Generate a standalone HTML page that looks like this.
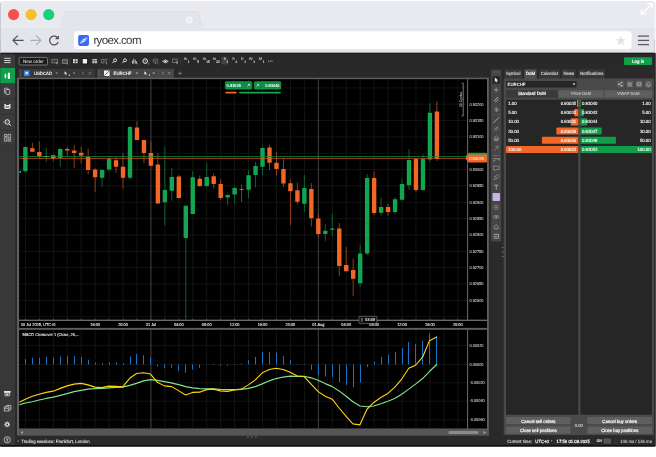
<!DOCTYPE html>
<html lang="en"><head><meta charset="utf-8"><title>ryoex.com</title>
<style>
html,body{margin:0;padding:0;background:#fff;}
body{width:656px;height:457px;overflow:hidden;position:relative;font-family:"Liberation Sans",sans-serif;}
#win{position:absolute;left:0;top:0;width:656px;height:457px;will-change:transform;}
svg text{font-family:"Liberation Sans",sans-serif;text-rendering:geometricPrecision;}
</style></head><body>
<svg id="win" width="656" height="457" viewBox="0 0 656 457">
<rect x="0.00" y="0.00" width="656.00" height="457.00" fill="#ffffff"/>
<rect x="0.60" y="40.00" width="654.20" height="406.40" fill="#2a2a2a"/>
<rect x="654.60" y="52.80" width="1.40" height="393.60" fill="#4a4a4a"/>
<rect x="654.60" y="2.00" width="1.40" height="50.80" fill="#f6f6f8"/>
<clipPath id="wclip"><path d="M0.3,446.5 V3.4 Q0.3,0.9 2.8,0.9 H652.2 Q654.7,0.9 654.7,3.4 V446.5 Z"/></clipPath>
<g clip-path="url(#wclip)">
<rect x="0.00" y="0.00" width="656.00" height="27.00" fill="#e9eaef"/>
<rect x="0.00" y="27.00" width="656.00" height="25.80" fill="#e4e5ea"/>
<path d="M60.5,27.2 L64.6,12.6 Q65,11.6 66,11.6 L196.8,11.6 Q197.9,11.6 198.3,12.6 L202.6,27.2 Z" fill="#e4e5ea" stroke="#d4d5da" stroke-width="0.5"/>
<rect x="0.00" y="26.70" width="656.00" height="0.80" fill="#f1f2f5"/>
<rect x="61.20" y="26.60" width="140.80" height="1.00" fill="#e4e5ea"/>
<rect x="0.00" y="2.50" width="1.00" height="50.00" fill="#bcbdc1"/>
</g>
<circle cx="13.60" cy="14.60" r="5.60" fill="#f6504e" stroke="none" stroke-width="1"/>
<circle cx="31.10" cy="14.60" r="5.60" fill="#f4c02f" stroke="none" stroke-width="1"/>
<circle cx="48.70" cy="14.60" r="5.60" fill="#12d375" stroke="none" stroke-width="1"/>
<circle cx="189.30" cy="20.00" r="3.40" fill="#f6f6f8" stroke="none" stroke-width="1"/>
<path d="M187.9,18.6 L190.7,21.4 M190.7,18.6 L187.9,21.4" fill="none" stroke="#d9dadf" stroke-width="0.9"/>
<path d="M642,13.4 L651.6,4.2 M647.6,3.9 L652.1,3.7 L651.9,8.2 M641.4,9.6 L641.3,14 L645.8,13.9" fill="none" stroke="#ffffff" stroke-width="1.3" stroke-linecap="round" stroke-linejoin="round"/>
<path d="M23.6,40.3 L13.2,40.3 M17.7,35.6 L13.0,40.3 L17.7,45.0" fill="none" stroke="#505054" stroke-width="1.2" stroke-linejoin="miter"/>
<path d="M30.2,40.3 L40.6,40.3 M36.1,35.6 L40.8,40.3 L36.1,45.0" fill="none" stroke="#adaeb2" stroke-width="1.2"/>
<path d="M57.9,38.3 A4.4,4.4 0 1 0 58.2,42.0" fill="none" stroke="#505054" stroke-width="1.2"/>
<path d="M58.9,35.2 L58.9,39.2 L55.0,39.2 Z" fill="#505054" stroke="none" stroke-width="1"/>
<rect x="74.00" y="31.20" width="557.60" height="17.80" fill="#ffffff" rx="2.2"/>
<rect x="78.20" y="35.00" width="10.80" height="10.90" fill="#3a69f4" rx="1.8"/>
<path d="M80.3,42.9 L82.9,39.5 H85.0 L82.4,42.9 Z M82.5,41.5 L85.1,38.1 H87.1 L84.5,41.5 Z" fill="none" stroke="#eef3ff" stroke-width="0.75" stroke-linejoin="round"/>
<text x="93.40" y="43.67" font-size="11.5" fill="#37373b" letter-spacing="-0.62">ryoex.com</text>
<polygon points="620.80,35.40 622.15,38.94 625.94,39.13 622.99,41.51 623.97,45.17 620.80,43.10 617.63,45.17 618.61,41.51 615.66,39.13 619.45,38.94" fill="#e2e3e7"/>
<rect x="637.90" y="35.45" width="11.10" height="1.30" fill="#5b5b5f"/>
<rect x="637.90" y="39.75" width="11.10" height="1.30" fill="#5b5b5f"/>
<rect x="637.90" y="43.95" width="11.10" height="1.30" fill="#5b5b5f"/>
<g clip-path="url(#wclip)">
<rect x="0.00" y="52.80" width="656.00" height="394.00" fill="#1d1d1d"/>
<rect x="0.00" y="54.40" width="656.00" height="392.00" fill="#2a2a2a"/>
<rect x="0.00" y="54.40" width="15.00" height="392.00" fill="#3b3b3b"/>
<rect x="4.20" y="57.85" width="6.40" height="0.90" fill="#e6e6e6"/>
<rect x="4.20" y="60.05" width="6.40" height="0.90" fill="#e6e6e6"/>
<rect x="4.20" y="62.15" width="6.40" height="0.90" fill="#e6e6e6"/>
<rect x="0.00" y="67.90" width="15.00" height="15.30" fill="#0e9f4a"/>
<polygon points="4.6,74.0 7.0,76.0 4.6,78.1" fill="#fff"/>
<rect x="5.20" y="73.00" width="0.50" height="6.00" fill="#e8fff0"/>
<rect x="7.80" y="72.80" width="2.20" height="6.00" fill="#fff" rx="0.3"/>
<rect x="0.00" y="98.70" width="15.00" height="0.60" fill="#2c2c2c"/>
<rect x="0.00" y="114.40" width="15.00" height="0.60" fill="#2c2c2c"/>
<rect x="0.00" y="129.90" width="15.00" height="0.60" fill="#2c2c2c"/>
<rect x="0.00" y="144.90" width="15.00" height="0.60" fill="#2c2c2c"/>
<rect x="0.00" y="145.50" width="15.00" height="301.00" fill="#383838"/>
<rect x="4.4" y="88.2" width="3.9" height="4.9" rx="0.8" fill="none" stroke="#dcdcdc" stroke-width="0.65"/>
<rect x="5.8" y="89.5" width="3.9" height="4.9" rx="0.8" fill="#3b3b3b" stroke="#e6e6e6" stroke-width="0.7"/>
<rect x="4.3" y="105.0" width="6.2" height="3.9" rx="1.3" fill="#e8e8e8"/>
<path d="M4.9,105.4 l-0.5,-1.3 l1.6,0.7 M9.9,105.4 l0.5,-1.3 l-1.6,0.7" fill="#e8e8e8" stroke="#e8e8e8" stroke-width="0.6"/>
<rect x="5.40" y="106.50" width="4.00" height="1.00" fill="#3b3b3b" rx="0.4"/>
<circle cx="7.20" cy="122.00" r="2.30" fill="none" stroke="#e9e9e9" stroke-width="1.0"/>
<path d="M8.9,123.8 L10.9,125.8" fill="none" stroke="#e9e9e9" stroke-width="1.0"/>
<path d="M4.1,122.0 l-0.9,0.0 M6.2,122.4 l0.8,-0.8 l0.6,0.6 l0.7,-0.8" fill="none" stroke="#e9e9e9" stroke-width="0.45"/>
<path d="M4.4,134.4 h2.5 v2.2 h-2.5 z M8.1,134.4 h2.5 v3.6 h-2.5 z M4.4,137.8 h2.5 v3.4 h-2.5 z M8.1,139.2 h2.5 v2 h-2.5 z" fill="none" stroke="#e9e9e9" stroke-width="0.6"/>
<rect x="4.00" y="391.00" width="6.60" height="1.70" fill="#e9e9e9" rx="0.3"/>
<path d="M5,392.8 h4.6 v3 h-4.6 z" fill="none" stroke="#e9e9e9" stroke-width="0.7"/>
<rect x="6.30" y="393.60" width="2.00" height="1.50" fill="#e9e9e9"/>
<path d="M4.3,406.8 h4.6 v4.2 h-4.6 z M5.4,406.6 l1.2,-1.2 h4.2 v4.2 l-1.6,1" fill="none" stroke="#e9e9e9" stroke-width="0.7"/>
<path d="M4.4,408.4 h4.4" fill="none" stroke="#e9e9e9" stroke-width="0.6"/>
<circle cx="7.20" cy="424.40" r="1.60" fill="none" stroke="#e9e9e9" stroke-width="1.2"/>
<line x1="9.20" y1="424.40" x2="10.10" y2="424.40" stroke="#e9e9e9" stroke-width="0.9"/>
<line x1="8.61" y1="425.81" x2="9.25" y2="426.45" stroke="#e9e9e9" stroke-width="0.9"/>
<line x1="7.20" y1="426.40" x2="7.20" y2="427.30" stroke="#e9e9e9" stroke-width="0.9"/>
<line x1="5.79" y1="425.81" x2="5.15" y2="426.45" stroke="#e9e9e9" stroke-width="0.9"/>
<line x1="5.20" y1="424.40" x2="4.30" y2="424.40" stroke="#e9e9e9" stroke-width="0.9"/>
<line x1="5.79" y1="422.99" x2="5.15" y2="422.35" stroke="#e9e9e9" stroke-width="0.9"/>
<line x1="7.20" y1="422.40" x2="7.20" y2="421.50" stroke="#e9e9e9" stroke-width="0.9"/>
<line x1="8.61" y1="422.99" x2="9.25" y2="422.35" stroke="#e9e9e9" stroke-width="0.9"/>
<circle cx="7.20" cy="439.80" r="3.10" fill="none" stroke="#e9e9e9" stroke-width="0.7"/>
<text transform="translate(7.20 441.78) scale(0.9259 1)" font-size="4.968" fill="#e9e9e9" text-anchor="middle" font-weight="bold">?</text>
<rect x="15.00" y="54.20" width="641.00" height="13.80" fill="#292929"/>
<rect x="19.10" y="57.40" width="28.40" height="7.60" fill="#1b1b1b" rx="1.2" stroke="#a2a2a2" stroke-width="0.65"/>
<text transform="translate(33.30 62.94) scale(0.9259 1)" font-size="4.86" fill="#f2f2f2" text-anchor="middle">New order</text>
<line x1="49.50" y1="57.60" x2="49.50" y2="64.80" stroke="#3d3d3d" stroke-width="0.5"/>
<line x1="60.00" y1="57.60" x2="60.00" y2="64.80" stroke="#3d3d3d" stroke-width="0.5"/>
<line x1="70.60" y1="57.60" x2="70.60" y2="64.80" stroke="#3d3d3d" stroke-width="0.5"/>
<line x1="99.80" y1="57.60" x2="99.80" y2="64.80" stroke="#3d3d3d" stroke-width="0.5"/>
<line x1="109.40" y1="57.60" x2="109.40" y2="64.80" stroke="#3d3d3d" stroke-width="0.5"/>
<path d="M51.9,59.3 h5.6 v3.6 h-5.6 z" fill="none" stroke="#a9a9a9" stroke-width="0.6"/>
<path d="M55.6,61.4 l2,1.8 l-0.9,0.1 l0.5,1.1" fill="none" stroke="#cfcfcf" stroke-width="0.55"/>
<path d="M53.2,61 h1.6" fill="none" stroke="#a9a9a9" stroke-width="0.5"/>
<path d="M62.4,59.3 h5.2 v4.2 h-5.2 z M62.4,60.6 h5.2 M62.4,62.2 h5.2" fill="none" stroke="#a9a9a9" stroke-width="0.55"/>
<path d="M66.6,63.2 l1.5,1.3" fill="none" stroke="#cfcfcf" stroke-width="0.55"/>
<rect x="73.00" y="59.00" width="2.10" height="1.90" fill="#cdcdcd"/>
<rect x="73.00" y="61.30" width="2.10" height="1.90" fill="#cdcdcd"/>
<rect x="75.60" y="59.00" width="2.10" height="1.90" fill="#cdcdcd"/>
<rect x="75.60" y="61.30" width="2.10" height="1.90" fill="#cdcdcd"/>
<rect x="81.60" y="57.90" width="6.60" height="6.60" fill="#1a1a1a" rx="0.9"/>
<rect x="82.70" y="59.00" width="4.40" height="4.40" fill="#f2f2f2" rx="0.3"/>
<rect x="92.30" y="59.00" width="4.80" height="1.50" fill="#bdbdbd"/>
<rect x="92.30" y="61.00" width="2.20" height="2.30" fill="#bdbdbd"/>
<rect x="94.90" y="61.00" width="2.20" height="2.30" fill="#bdbdbd"/>
<path d="M101.6,59.4 h2.4 v3.6 h-2.4 z M104.6,59.4 h2.2 v2.0" fill="none" stroke="#a9a9a9" stroke-width="0.55"/>
<path d="M105.2,61.6 l1.8,1.6 l-0.8,0.1 l0.4,1.0" fill="none" stroke="#cfcfcf" stroke-width="0.5"/>
<circle cx="115.10" cy="60.30" r="1.50" fill="none" stroke="#f0f0f0" stroke-width="0.85"/>
<path d="M114.0,61.4 L112.4,63.1" fill="none" stroke="#f0f0f0" stroke-width="0.95"/>
<circle cx="125.00" cy="60.30" r="1.50" fill="none" stroke="#f0f0f0" stroke-width="0.85"/>
<path d="M123.9,61.4 L122.30000000000001,63.1" fill="none" stroke="#f0f0f0" stroke-width="0.95"/>
<line x1="129.30" y1="57.60" x2="129.30" y2="64.60" stroke="#444" stroke-width="0.5"/>
<rect x="132.00" y="60.60" width="0.80" height="3.00" fill="#e0e0e0"/>
<rect x="133.40" y="58.80" width="0.80" height="4.80" fill="#e0e0e0"/>
<rect x="134.80" y="59.80" width="0.80" height="3.80" fill="#e0e0e0"/>
<rect x="136.20" y="61.40" width="0.80" height="2.20" fill="#e0e0e0"/>
<rect x="136.80" y="63.50" width="0.80" height="0.80" fill="#ccc"/>
<circle cx="145.20" cy="61.10" r="2.30" fill="none" stroke="#eee" stroke-width="1.0"/>
<path d="M145.2,59.8 v1.7 l1.0,0.7" fill="none" stroke="#eee" stroke-width="0.55"/>
<rect x="147.80" y="63.50" width="0.80" height="0.80" fill="#ddd"/>
<line x1="150.00" y1="57.60" x2="150.00" y2="64.60" stroke="#444" stroke-width="0.5"/>
<path d="M155.5,58.4 l2.3,1.2 v2.7 l-2.3,1.2 l-2.3,-1.2 v-2.7 z M153.2,59.6 l2.3,1.2 l2.3,-1.2 M155.5,60.8 v2.7" fill="none" stroke="#8d8d8d" stroke-width="0.55"/>
<rect x="157.60" y="63.40" width="0.80" height="0.80" fill="#aaa"/>
<path d="M162.6,61.4 q2.8,-3.0 5.6,0 q-2.8,3.0 -5.6,0 z" fill="none" stroke="#eee" stroke-width="0.75"/>
<circle cx="165.40" cy="61.40" r="0.95" fill="#eee" stroke="none" stroke-width="1"/>
<path d="M172.5,59.1 h4.8 v3.4 h-4.8 z" fill="none" stroke="#a9a9a9" stroke-width="0.55"/>
<path d="M175.6,61.0 l2.2,1.9 l-1,0.1 l0.6,1.2" fill="none" stroke="#d0d0d0" stroke-width="0.55"/>
<line x1="180.70" y1="57.60" x2="180.70" y2="64.60" stroke="#444" stroke-width="0.5"/>
<rect x="221.40" y="57.00" width="6.50" height="7.60" fill="#424242" rx="0.8"/>
<text transform="translate(187.00 60.37) scale(0.9259 1)" font-size="4.104" fill="#d4d0c8" text-anchor="end"  stroke="#d4d0c8" stroke-width="0.1">m</text>
<text transform="translate(187.80 63.24) scale(0.9259 1)" font-size="3.456" fill="#ececec"  stroke="#ececec" stroke-width="0.08">1</text>
<text transform="translate(196.40 60.37) scale(0.9259 1)" font-size="4.104" fill="#d4d0c8" text-anchor="end"  stroke="#d4d0c8" stroke-width="0.1">m</text>
<text transform="translate(197.20 63.24) scale(0.9259 1)" font-size="3.456" fill="#ececec"  stroke="#ececec" stroke-width="0.08">5</text>
<text transform="translate(205.90 60.37) scale(0.9259 1)" font-size="4.104" fill="#d4d0c8" text-anchor="end"  stroke="#d4d0c8" stroke-width="0.1">m</text>
<text transform="translate(206.30 63.24) scale(0.9259 1)" font-size="3.456" fill="#ececec"  stroke="#ececec" stroke-width="0.08">15</text>
<text transform="translate(215.90 60.37) scale(0.9259 1)" font-size="4.104" fill="#d4d0c8" text-anchor="end"  stroke="#d4d0c8" stroke-width="0.1">m</text>
<text transform="translate(216.30 63.24) scale(0.9259 1)" font-size="3.456" fill="#ececec"  stroke="#ececec" stroke-width="0.08">30</text>
<text transform="translate(225.80 60.37) scale(0.9259 1)" font-size="4.104" fill="#d4d0c8" text-anchor="end"  stroke="#d4d0c8" stroke-width="0.1">h</text>
<text transform="translate(226.60 63.24) scale(0.9259 1)" font-size="3.456" fill="#ececec"  stroke="#ececec" stroke-width="0.08">1</text>
<text transform="translate(234.60 60.37) scale(0.9259 1)" font-size="4.104" fill="#d4d0c8" text-anchor="end"  stroke="#d4d0c8" stroke-width="0.1">h</text>
<text transform="translate(235.40 63.24) scale(0.9259 1)" font-size="3.456" fill="#ececec"  stroke="#ececec" stroke-width="0.08">4</text>
<text transform="translate(243.40 60.37) scale(0.9259 1)" font-size="4.104" fill="#d4d0c8" text-anchor="end"  stroke="#d4d0c8" stroke-width="0.1">D</text>
<text transform="translate(244.20 63.24) scale(0.9259 1)" font-size="3.456" fill="#ececec"  stroke="#ececec" stroke-width="0.08">1</text>
<text transform="translate(252.50 60.37) scale(0.9259 1)" font-size="4.104" fill="#d4d0c8" text-anchor="end"  stroke="#d4d0c8" stroke-width="0.1">W</text>
<text transform="translate(253.30 63.24) scale(0.9259 1)" font-size="3.456" fill="#ececec"  stroke="#ececec" stroke-width="0.08">1</text>
<text transform="translate(262.00 60.37) scale(0.9259 1)" font-size="4.104" fill="#d4d0c8" text-anchor="end"  stroke="#d4d0c8" stroke-width="0.1">M</text>
<text transform="translate(262.80 63.24) scale(0.9259 1)" font-size="3.456" fill="#ececec"  stroke="#ececec" stroke-width="0.08">1</text>
<circle cx="268.60" cy="61.00" r="0.55" fill="#dcdcdc" stroke="none" stroke-width="1"/>
<circle cx="270.30" cy="61.00" r="0.55" fill="#dcdcdc" stroke="none" stroke-width="1"/>
<circle cx="272.00" cy="61.00" r="0.55" fill="#dcdcdc" stroke="none" stroke-width="1"/>
<rect x="624.00" y="57.20" width="28.00" height="7.80" fill="#10a04a" rx="1.3"/>
<text transform="translate(638.10 62.90) scale(0.9259 1)" font-size="4.752" fill="#ffffff" text-anchor="middle"  stroke="#ffffff" stroke-width="0.2">Log in</text>
<rect x="15.00" y="68.00" width="475.00" height="10.20" fill="#292929"/>
<rect x="18.40" y="68.80" width="76.80" height="9.40" fill="#383838"/>
<rect x="97.20" y="68.80" width="76.70" height="9.40" fill="#464646"/>
<rect x="20.10" y="70.00" width="0.70" height="6.40" fill="#5d5d5d"/>
<rect x="98.60" y="70.00" width="0.70" height="6.40" fill="#6a6a6a"/>
<rect x="24.00" y="70.60" width="5.40" height="5.40" fill="#2d8cf0" rx="0.3"/>
<rect x="25.60" y="71.90" width="2.20" height="2.20" fill="#e6f1ff"/>
<text transform="translate(33.90 74.66) scale(0.9259 1)" font-size="4.644" fill="#f4f4f4" stroke="#f4f4f4" stroke-width="0.15">USDCAD</text>
<polygon points="55.50,72.46 57.90,72.46 56.70,74.26" fill="#9a9a9a"/>
<path d="M64.6,71.2 l2.6,2.2 l-1.2,0.1 l0.7,1.4 l-0.6,0.3 l-0.7,-1.4 l-0.8,0.8 z" fill="#f0f0f0" stroke="none" stroke-width="1"/>
<text transform="translate(68.60 76.08) scale(0.9259 1)" font-size="3.024" fill="#f5ecd2" font-weight="bold">1</text>
<polygon points="72.80,72.46 75.20,72.46 74.00,74.26" fill="#9a9a9a"/>
<rect x="78.60" y="70.00" width="0.50" height="6.40" fill="#4c4c4c"/>
<path d="M82,74.2 l2,-2 M82.2,72.6 a0.9,0.9 0 0 1 1.3,-0.3 M83.9,73.9 a0.9,0.9 0 0 1 -1.3,0.3" fill="none" stroke="#8c8c8c" stroke-width="0.55"/>
<path d="M88.7,72 l2.4,2.6 M91.1,72 l-2.4,2.6" fill="none" stroke="#8c8c8c" stroke-width="0.6"/>
<rect x="104.00" y="70.50" width="5.60" height="5.60" fill="#f7f7f7" rx="0.3"/>
<path d="M104.4,75.7 L109.2,70.9" fill="none" stroke="#e5342d" stroke-width="1.0"/>
<path d="M108.8,75.4 l1.2,1.2" fill="none" stroke="#ddd" stroke-width="0.5"/>
<text transform="translate(113.60 74.66) scale(0.9259 1)" font-size="4.644" fill="#f4f4f4" stroke="#f4f4f4" stroke-width="0.15">EURCHF</text>
<polygon points="135.60,72.46 138.00,72.46 136.80,74.26" fill="#b5b5b5"/>
<path d="M144.4,71.2 l2.6,2.2 l-1.2,0.1 l0.7,1.4 l-0.6,0.3 l-0.7,-1.4 l-0.8,0.8 z" fill="#f0f0f0" stroke="none" stroke-width="1"/>
<text transform="translate(148.40 76.08) scale(0.9259 1)" font-size="3.024" fill="#f5ecd2" font-weight="bold">1</text>
<polygon points="152.50,72.46 154.90,72.46 153.70,74.26" fill="#b5b5b5"/>
<rect x="158.40" y="70.00" width="0.50" height="6.40" fill="#5a5a5a"/>
<path d="M161.9,74.2 l2,-2 M162.1,72.6 a0.9,0.9 0 0 1 1.3,-0.3 M163.8,73.9 a0.9,0.9 0 0 1 -1.3,0.3" fill="none" stroke="#9c9c9c" stroke-width="0.55"/>
<path d="M168.1,72 l2.4,2.6 M170.5,72 l-2.4,2.6" fill="none" stroke="#9c9c9c" stroke-width="0.6"/>
<path d="M178.3,73.3 h3.4 M180,71.6 v3.4" fill="none" stroke="#858585" stroke-width="0.85"/>
<rect x="17.00" y="77.70" width="471.80" height="358.00" fill="#5f5f5f"/>
<rect x="19.10" y="79.20" width="467.90" height="240.60" fill="#000"/>
<rect x="19.10" y="320.30" width="467.90" height="7.60" fill="#000"/>
<rect x="19.10" y="329.80" width="467.90" height="98.90" fill="#000"/>
<rect x="19.10" y="428.60" width="469.70" height="7.10" fill="#565656"/>
<rect x="448.50" y="430.90" width="29.90" height="3.20" fill="#8a8a8a" rx="1.3"/>
<polygon points="20.6,432.4 23.0,430.9 23.0,433.9" fill="#a8a8a8"/>
<polygon points="486.0,432.4 483.6,430.9 483.6,433.9" fill="#a8a8a8"/>
<circle cx="247.90" cy="436.90" r="0.55" fill="#9a9a9a" stroke="none" stroke-width="1"/>
<circle cx="251.90" cy="436.90" r="0.55" fill="#9a9a9a" stroke="none" stroke-width="1"/>
<circle cx="255.90" cy="436.90" r="0.55" fill="#9a9a9a" stroke="none" stroke-width="1"/>
<clipPath id="cclip"><rect x="19.4" y="79.2" width="448" height="240.6"/></clipPath>
<clipPath id="mclip"><rect x="19.4" y="329.8" width="448" height="98.9"/></clipPath>
<g clip-path="url(#cclip)">
<line x1="19.40" y1="87.85" x2="467.40" y2="87.85" stroke="#161616" stroke-width="0.8"/>
<line x1="19.40" y1="104.20" x2="467.40" y2="104.20" stroke="#161616" stroke-width="0.8"/>
<line x1="19.40" y1="120.55" x2="467.40" y2="120.55" stroke="#161616" stroke-width="0.8"/>
<line x1="19.40" y1="136.90" x2="467.40" y2="136.90" stroke="#161616" stroke-width="0.8"/>
<line x1="19.40" y1="153.25" x2="467.40" y2="153.25" stroke="#161616" stroke-width="0.8"/>
<line x1="19.40" y1="169.60" x2="467.40" y2="169.60" stroke="#161616" stroke-width="0.8"/>
<line x1="19.40" y1="185.95" x2="467.40" y2="185.95" stroke="#161616" stroke-width="0.8"/>
<line x1="19.40" y1="202.30" x2="467.40" y2="202.30" stroke="#161616" stroke-width="0.8"/>
<line x1="19.40" y1="218.65" x2="467.40" y2="218.65" stroke="#161616" stroke-width="0.8"/>
<line x1="19.40" y1="235.00" x2="467.40" y2="235.00" stroke="#161616" stroke-width="0.8"/>
<line x1="19.40" y1="251.35" x2="467.40" y2="251.35" stroke="#161616" stroke-width="0.8"/>
<line x1="19.40" y1="267.70" x2="467.40" y2="267.70" stroke="#161616" stroke-width="0.8"/>
<line x1="19.40" y1="284.05" x2="467.40" y2="284.05" stroke="#161616" stroke-width="0.8"/>
<line x1="19.40" y1="300.40" x2="467.40" y2="300.40" stroke="#161616" stroke-width="0.8"/>
<line x1="19.40" y1="316.75" x2="467.40" y2="316.75" stroke="#161616" stroke-width="0.8"/>
<line x1="25.38" y1="79.20" x2="25.38" y2="319.80" stroke="#191919" stroke-width="0.8"/>
<line x1="39.32" y1="79.20" x2="39.32" y2="319.80" stroke="#191919" stroke-width="0.8"/>
<line x1="53.27" y1="79.20" x2="53.27" y2="319.80" stroke="#191919" stroke-width="0.8"/>
<line x1="67.23" y1="79.20" x2="67.23" y2="319.80" stroke="#191919" stroke-width="0.8"/>
<line x1="81.18" y1="79.20" x2="81.18" y2="319.80" stroke="#191919" stroke-width="0.8"/>
<line x1="95.12" y1="79.20" x2="95.12" y2="319.80" stroke="#191919" stroke-width="0.8"/>
<line x1="109.07" y1="79.20" x2="109.07" y2="319.80" stroke="#191919" stroke-width="0.8"/>
<line x1="123.02" y1="79.20" x2="123.02" y2="319.80" stroke="#191919" stroke-width="0.8"/>
<line x1="136.97" y1="79.20" x2="136.97" y2="319.80" stroke="#191919" stroke-width="0.8"/>
<line x1="150.93" y1="79.20" x2="150.93" y2="319.80" stroke="#444444" stroke-width="1.0"/>
<line x1="164.88" y1="79.20" x2="164.88" y2="319.80" stroke="#191919" stroke-width="0.8"/>
<line x1="178.82" y1="79.20" x2="178.82" y2="319.80" stroke="#191919" stroke-width="0.8"/>
<line x1="192.77" y1="79.20" x2="192.77" y2="319.80" stroke="#191919" stroke-width="0.8"/>
<line x1="206.72" y1="79.20" x2="206.72" y2="319.80" stroke="#191919" stroke-width="0.8"/>
<line x1="220.67" y1="79.20" x2="220.67" y2="319.80" stroke="#191919" stroke-width="0.8"/>
<line x1="234.62" y1="79.20" x2="234.62" y2="319.80" stroke="#191919" stroke-width="0.8"/>
<line x1="248.57" y1="79.20" x2="248.57" y2="319.80" stroke="#191919" stroke-width="0.8"/>
<line x1="262.52" y1="79.20" x2="262.52" y2="319.80" stroke="#191919" stroke-width="0.8"/>
<line x1="276.48" y1="79.20" x2="276.48" y2="319.80" stroke="#191919" stroke-width="0.8"/>
<line x1="290.42" y1="79.20" x2="290.42" y2="319.80" stroke="#191919" stroke-width="0.8"/>
<line x1="304.38" y1="79.20" x2="304.38" y2="319.80" stroke="#191919" stroke-width="0.8"/>
<line x1="318.32" y1="79.20" x2="318.32" y2="319.80" stroke="#444444" stroke-width="1.0"/>
<line x1="332.27" y1="79.20" x2="332.27" y2="319.80" stroke="#191919" stroke-width="0.8"/>
<line x1="346.22" y1="79.20" x2="346.22" y2="319.80" stroke="#191919" stroke-width="0.8"/>
<line x1="360.17" y1="79.20" x2="360.17" y2="319.80" stroke="#191919" stroke-width="0.8"/>
<line x1="374.12" y1="79.20" x2="374.12" y2="319.80" stroke="#191919" stroke-width="0.8"/>
<line x1="388.07" y1="79.20" x2="388.07" y2="319.80" stroke="#191919" stroke-width="0.8"/>
<line x1="402.02" y1="79.20" x2="402.02" y2="319.80" stroke="#191919" stroke-width="0.8"/>
<line x1="415.97" y1="79.20" x2="415.97" y2="319.80" stroke="#191919" stroke-width="0.8"/>
<line x1="429.92" y1="79.20" x2="429.92" y2="319.80" stroke="#191919" stroke-width="0.8"/>
<line x1="443.88" y1="79.20" x2="443.88" y2="319.80" stroke="#191919" stroke-width="0.8"/>
<line x1="457.82" y1="79.20" x2="457.82" y2="319.80" stroke="#191919" stroke-width="0.8"/>
</g>
<g clip-path="url(#mclip)">
<line x1="19.40" y1="345.60" x2="467.40" y2="345.60" stroke="#161616" stroke-width="0.8"/>
<line x1="19.40" y1="364.50" x2="467.40" y2="364.50" stroke="#161616" stroke-width="0.8"/>
<line x1="19.40" y1="382.80" x2="467.40" y2="382.80" stroke="#161616" stroke-width="0.8"/>
<line x1="19.40" y1="401.20" x2="467.40" y2="401.20" stroke="#161616" stroke-width="0.8"/>
<line x1="19.40" y1="419.80" x2="467.40" y2="419.80" stroke="#161616" stroke-width="0.8"/>
<line x1="25.38" y1="329.80" x2="25.38" y2="428.70" stroke="#191919" stroke-width="0.8"/>
<line x1="39.32" y1="329.80" x2="39.32" y2="428.70" stroke="#191919" stroke-width="0.8"/>
<line x1="53.27" y1="329.80" x2="53.27" y2="428.70" stroke="#191919" stroke-width="0.8"/>
<line x1="67.23" y1="329.80" x2="67.23" y2="428.70" stroke="#191919" stroke-width="0.8"/>
<line x1="81.18" y1="329.80" x2="81.18" y2="428.70" stroke="#191919" stroke-width="0.8"/>
<line x1="95.12" y1="329.80" x2="95.12" y2="428.70" stroke="#191919" stroke-width="0.8"/>
<line x1="109.07" y1="329.80" x2="109.07" y2="428.70" stroke="#191919" stroke-width="0.8"/>
<line x1="123.02" y1="329.80" x2="123.02" y2="428.70" stroke="#191919" stroke-width="0.8"/>
<line x1="136.97" y1="329.80" x2="136.97" y2="428.70" stroke="#191919" stroke-width="0.8"/>
<line x1="150.93" y1="329.80" x2="150.93" y2="428.70" stroke="#444444" stroke-width="1.0"/>
<line x1="164.88" y1="329.80" x2="164.88" y2="428.70" stroke="#191919" stroke-width="0.8"/>
<line x1="178.82" y1="329.80" x2="178.82" y2="428.70" stroke="#191919" stroke-width="0.8"/>
<line x1="192.77" y1="329.80" x2="192.77" y2="428.70" stroke="#191919" stroke-width="0.8"/>
<line x1="206.72" y1="329.80" x2="206.72" y2="428.70" stroke="#191919" stroke-width="0.8"/>
<line x1="220.67" y1="329.80" x2="220.67" y2="428.70" stroke="#191919" stroke-width="0.8"/>
<line x1="234.62" y1="329.80" x2="234.62" y2="428.70" stroke="#191919" stroke-width="0.8"/>
<line x1="248.57" y1="329.80" x2="248.57" y2="428.70" stroke="#191919" stroke-width="0.8"/>
<line x1="262.52" y1="329.80" x2="262.52" y2="428.70" stroke="#191919" stroke-width="0.8"/>
<line x1="276.48" y1="329.80" x2="276.48" y2="428.70" stroke="#191919" stroke-width="0.8"/>
<line x1="290.42" y1="329.80" x2="290.42" y2="428.70" stroke="#191919" stroke-width="0.8"/>
<line x1="304.38" y1="329.80" x2="304.38" y2="428.70" stroke="#191919" stroke-width="0.8"/>
<line x1="318.32" y1="329.80" x2="318.32" y2="428.70" stroke="#444444" stroke-width="1.0"/>
<line x1="332.27" y1="329.80" x2="332.27" y2="428.70" stroke="#191919" stroke-width="0.8"/>
<line x1="346.22" y1="329.80" x2="346.22" y2="428.70" stroke="#191919" stroke-width="0.8"/>
<line x1="360.17" y1="329.80" x2="360.17" y2="428.70" stroke="#191919" stroke-width="0.8"/>
<line x1="374.12" y1="329.80" x2="374.12" y2="428.70" stroke="#191919" stroke-width="0.8"/>
<line x1="388.07" y1="329.80" x2="388.07" y2="428.70" stroke="#191919" stroke-width="0.8"/>
<line x1="402.02" y1="329.80" x2="402.02" y2="428.70" stroke="#191919" stroke-width="0.8"/>
<line x1="415.97" y1="329.80" x2="415.97" y2="428.70" stroke="#191919" stroke-width="0.8"/>
<line x1="429.92" y1="329.80" x2="429.92" y2="428.70" stroke="#191919" stroke-width="0.8"/>
<line x1="443.88" y1="329.80" x2="443.88" y2="428.70" stroke="#191919" stroke-width="0.8"/>
<line x1="457.82" y1="329.80" x2="457.82" y2="428.70" stroke="#191919" stroke-width="0.8"/>
</g>
<line x1="467.60" y1="79.20" x2="467.60" y2="319.80" stroke="#9c9c9c" stroke-width="0.7"/>
<line x1="467.60" y1="329.80" x2="467.60" y2="428.70" stroke="#9c9c9c" stroke-width="0.7"/>
<line x1="19.10" y1="320.30" x2="487.00" y2="320.30" stroke="#989898" stroke-width="0.8"/>
<line x1="25.38" y1="318.80" x2="25.38" y2="319.90" stroke="#8a8a8a" stroke-width="0.6"/>
<line x1="39.32" y1="318.80" x2="39.32" y2="319.90" stroke="#8a8a8a" stroke-width="0.6"/>
<line x1="53.27" y1="318.80" x2="53.27" y2="319.90" stroke="#8a8a8a" stroke-width="0.6"/>
<line x1="67.23" y1="318.80" x2="67.23" y2="319.90" stroke="#8a8a8a" stroke-width="0.6"/>
<line x1="81.18" y1="318.80" x2="81.18" y2="319.90" stroke="#8a8a8a" stroke-width="0.6"/>
<line x1="95.12" y1="318.80" x2="95.12" y2="319.90" stroke="#8a8a8a" stroke-width="0.6"/>
<line x1="109.07" y1="318.80" x2="109.07" y2="319.90" stroke="#8a8a8a" stroke-width="0.6"/>
<line x1="123.02" y1="318.80" x2="123.02" y2="319.90" stroke="#8a8a8a" stroke-width="0.6"/>
<line x1="136.97" y1="318.80" x2="136.97" y2="319.90" stroke="#8a8a8a" stroke-width="0.6"/>
<line x1="150.93" y1="318.80" x2="150.93" y2="319.90" stroke="#8a8a8a" stroke-width="0.6"/>
<line x1="164.88" y1="318.80" x2="164.88" y2="319.90" stroke="#8a8a8a" stroke-width="0.6"/>
<line x1="178.82" y1="318.80" x2="178.82" y2="319.90" stroke="#8a8a8a" stroke-width="0.6"/>
<line x1="192.77" y1="318.80" x2="192.77" y2="319.90" stroke="#8a8a8a" stroke-width="0.6"/>
<line x1="206.72" y1="318.80" x2="206.72" y2="319.90" stroke="#8a8a8a" stroke-width="0.6"/>
<line x1="220.67" y1="318.80" x2="220.67" y2="319.90" stroke="#8a8a8a" stroke-width="0.6"/>
<line x1="234.62" y1="318.80" x2="234.62" y2="319.90" stroke="#8a8a8a" stroke-width="0.6"/>
<line x1="248.57" y1="318.80" x2="248.57" y2="319.90" stroke="#8a8a8a" stroke-width="0.6"/>
<line x1="262.52" y1="318.80" x2="262.52" y2="319.90" stroke="#8a8a8a" stroke-width="0.6"/>
<line x1="276.48" y1="318.80" x2="276.48" y2="319.90" stroke="#8a8a8a" stroke-width="0.6"/>
<line x1="290.42" y1="318.80" x2="290.42" y2="319.90" stroke="#8a8a8a" stroke-width="0.6"/>
<line x1="304.38" y1="318.80" x2="304.38" y2="319.90" stroke="#8a8a8a" stroke-width="0.6"/>
<line x1="318.32" y1="318.80" x2="318.32" y2="319.90" stroke="#8a8a8a" stroke-width="0.6"/>
<line x1="332.27" y1="318.80" x2="332.27" y2="319.90" stroke="#8a8a8a" stroke-width="0.6"/>
<line x1="346.22" y1="318.80" x2="346.22" y2="319.90" stroke="#8a8a8a" stroke-width="0.6"/>
<line x1="360.17" y1="318.80" x2="360.17" y2="319.90" stroke="#8a8a8a" stroke-width="0.6"/>
<line x1="374.12" y1="318.80" x2="374.12" y2="319.90" stroke="#8a8a8a" stroke-width="0.6"/>
<line x1="388.07" y1="318.80" x2="388.07" y2="319.90" stroke="#8a8a8a" stroke-width="0.6"/>
<line x1="402.02" y1="318.80" x2="402.02" y2="319.90" stroke="#8a8a8a" stroke-width="0.6"/>
<line x1="415.97" y1="318.80" x2="415.97" y2="319.90" stroke="#8a8a8a" stroke-width="0.6"/>
<line x1="429.92" y1="318.80" x2="429.92" y2="319.90" stroke="#8a8a8a" stroke-width="0.6"/>
<line x1="443.88" y1="318.80" x2="443.88" y2="319.90" stroke="#8a8a8a" stroke-width="0.6"/>
<line x1="457.82" y1="318.80" x2="457.82" y2="319.90" stroke="#8a8a8a" stroke-width="0.6"/>
<g clip-path="url(#cclip)">
<rect x="19.10" y="170.80" width="2.00" height="2.20" fill="#12a652"/>
<line x1="25.38" y1="146.40" x2="25.38" y2="172.70" stroke="#0e7a3c" stroke-width="0.8"/>
<rect x="23.18" y="147.00" width="4.40" height="24.20" fill="#12a652" rx="0.3"/>
<line x1="32.35" y1="142.70" x2="32.35" y2="151.70" stroke="#b54a1a" stroke-width="0.8"/>
<rect x="30.15" y="148.20" width="4.40" height="3.50" fill="#f26626" rx="0.3"/>
<line x1="39.32" y1="141.60" x2="39.32" y2="158.70" stroke="#b54a1a" stroke-width="0.8"/>
<rect x="37.12" y="152.10" width="4.40" height="4.40" fill="#f26626" rx="0.3"/>
<line x1="46.30" y1="148.20" x2="46.30" y2="162.00" stroke="#0e7a3c" stroke-width="0.8"/>
<rect x="44.10" y="156.30" width="4.40" height="0.80" fill="#12a652" rx="0.3"/>
<line x1="53.27" y1="154.30" x2="53.27" y2="161.30" stroke="#b54a1a" stroke-width="0.8"/>
<rect x="51.07" y="155.20" width="4.40" height="3.30" fill="#f26626" rx="0.3"/>
<line x1="60.25" y1="148.20" x2="60.25" y2="166.80" stroke="#0e7a3c" stroke-width="0.8"/>
<rect x="58.05" y="149.00" width="4.40" height="9.00" fill="#12a652" rx="0.3"/>
<line x1="67.23" y1="147.00" x2="67.23" y2="155.80" stroke="#b54a1a" stroke-width="0.8"/>
<rect x="65.03" y="149.00" width="4.40" height="1.40" fill="#f26626" rx="0.3"/>
<line x1="74.20" y1="144.90" x2="74.20" y2="168.30" stroke="#b54a1a" stroke-width="0.8"/>
<rect x="72.00" y="150.40" width="4.40" height="2.60" fill="#f26626" rx="0.3"/>
<line x1="81.18" y1="146.60" x2="81.18" y2="163.50" stroke="#b54a1a" stroke-width="0.8"/>
<rect x="78.98" y="152.80" width="4.40" height="2.80" fill="#f26626" rx="0.3"/>
<line x1="88.15" y1="148.60" x2="88.15" y2="174.40" stroke="#b54a1a" stroke-width="0.8"/>
<rect x="85.95" y="156.90" width="4.40" height="13.10" fill="#f26626" rx="0.3"/>
<line x1="95.12" y1="168.30" x2="95.12" y2="192.00" stroke="#b54a1a" stroke-width="0.8"/>
<rect x="92.92" y="169.40" width="4.40" height="7.90" fill="#f26626" rx="0.3"/>
<line x1="102.10" y1="169.20" x2="102.10" y2="187.10" stroke="#0e7a3c" stroke-width="0.8"/>
<rect x="99.90" y="170.00" width="4.40" height="7.70" fill="#12a652" rx="0.3"/>
<line x1="109.07" y1="156.50" x2="109.07" y2="171.80" stroke="#0e7a3c" stroke-width="0.8"/>
<rect x="106.87" y="159.10" width="4.40" height="10.50" fill="#12a652" rx="0.3"/>
<line x1="116.05" y1="157.40" x2="116.05" y2="172.90" stroke="#b54a1a" stroke-width="0.8"/>
<rect x="113.85" y="160.20" width="4.40" height="6.60" fill="#f26626" rx="0.3"/>
<line x1="123.02" y1="153.20" x2="123.02" y2="188.70" stroke="#b54a1a" stroke-width="0.8"/>
<rect x="120.82" y="166.80" width="4.40" height="10.90" fill="#f26626" rx="0.3"/>
<line x1="130.00" y1="126.00" x2="130.00" y2="179.50" stroke="#0e7a3c" stroke-width="0.8"/>
<rect x="127.80" y="126.90" width="4.40" height="50.80" fill="#12a652" rx="0.3"/>
<line x1="136.97" y1="121.20" x2="136.97" y2="140.10" stroke="#b54a1a" stroke-width="0.8"/>
<rect x="134.77" y="127.40" width="4.40" height="12.70" fill="#f26626" rx="0.3"/>
<line x1="143.95" y1="139.90" x2="143.95" y2="163.10" stroke="#b54a1a" stroke-width="0.8"/>
<rect x="141.75" y="139.90" width="4.40" height="13.10" fill="#f26626" rx="0.3"/>
<line x1="150.93" y1="141.60" x2="150.93" y2="166.50" stroke="#b54a1a" stroke-width="0.8"/>
<rect x="148.73" y="153.00" width="4.40" height="12.70" fill="#f26626" rx="0.3"/>
<line x1="157.90" y1="153.20" x2="157.90" y2="203.60" stroke="#b54a1a" stroke-width="0.8"/>
<rect x="155.70" y="164.60" width="4.40" height="39.00" fill="#f26626" rx="0.3"/>
<line x1="164.88" y1="147.10" x2="164.88" y2="225.30" stroke="#0e7a3c" stroke-width="0.8"/>
<rect x="162.68" y="189.90" width="4.40" height="12.40" fill="#12a652" rx="0.3"/>
<line x1="171.85" y1="167.90" x2="171.85" y2="200.80" stroke="#0e7a3c" stroke-width="0.8"/>
<rect x="169.65" y="177.10" width="4.40" height="13.60" fill="#12a652" rx="0.3"/>
<line x1="178.82" y1="175.10" x2="178.82" y2="198.50" stroke="#b54a1a" stroke-width="0.8"/>
<rect x="176.62" y="176.60" width="4.40" height="21.40" fill="#f26626" rx="0.3"/>
<line x1="185.80" y1="205.80" x2="185.80" y2="319.80" stroke="#0e7a3c" stroke-width="0.8"/>
<rect x="183.60" y="205.80" width="4.40" height="32.20" fill="#12a652" rx="0.3"/>
<line x1="192.77" y1="171.20" x2="192.77" y2="213.90" stroke="#0e7a3c" stroke-width="0.8"/>
<rect x="190.57" y="177.30" width="4.40" height="36.60" fill="#12a652" rx="0.3"/>
<line x1="199.75" y1="175.50" x2="199.75" y2="186.90" stroke="#b54a1a" stroke-width="0.8"/>
<rect x="197.55" y="178.80" width="4.40" height="7.10" fill="#f26626" rx="0.3"/>
<line x1="206.72" y1="163.10" x2="206.72" y2="187.00" stroke="#0e7a3c" stroke-width="0.8"/>
<rect x="204.53" y="177.10" width="4.40" height="8.80" fill="#12a652" rx="0.3"/>
<line x1="213.70" y1="173.40" x2="213.70" y2="188.50" stroke="#b54a1a" stroke-width="0.8"/>
<rect x="211.50" y="176.20" width="4.40" height="7.70" fill="#f26626" rx="0.3"/>
<line x1="220.67" y1="179.30" x2="220.67" y2="200.00" stroke="#b54a1a" stroke-width="0.8"/>
<rect x="218.47" y="184.10" width="4.40" height="13.90" fill="#f26626" rx="0.3"/>
<line x1="227.65" y1="193.60" x2="227.65" y2="205.20" stroke="#0e7a3c" stroke-width="0.8"/>
<rect x="225.45" y="195.00" width="4.40" height="2.50" fill="#12a652" rx="0.3"/>
<line x1="234.62" y1="186.40" x2="234.62" y2="203.40" stroke="#0e7a3c" stroke-width="0.8"/>
<rect x="232.43" y="188.10" width="4.40" height="6.30" fill="#12a652" rx="0.3"/>
<line x1="241.60" y1="184.70" x2="241.60" y2="201.80" stroke="#b54a1a" stroke-width="0.8"/>
<rect x="239.40" y="189.00" width="4.40" height="0.80" fill="#f26626" rx="0.3"/>
<line x1="248.57" y1="170.10" x2="248.57" y2="198.00" stroke="#0e7a3c" stroke-width="0.8"/>
<rect x="246.38" y="175.30" width="4.40" height="14.40" fill="#12a652" rx="0.3"/>
<line x1="255.55" y1="161.70" x2="255.55" y2="187.30" stroke="#0e7a3c" stroke-width="0.8"/>
<rect x="253.35" y="166.10" width="4.40" height="8.80" fill="#12a652" rx="0.3"/>
<line x1="262.52" y1="146.40" x2="262.52" y2="174.90" stroke="#0e7a3c" stroke-width="0.8"/>
<rect x="260.32" y="148.00" width="4.40" height="18.80" fill="#12a652" rx="0.3"/>
<line x1="269.50" y1="144.90" x2="269.50" y2="169.90" stroke="#b54a1a" stroke-width="0.8"/>
<rect x="267.30" y="147.50" width="4.40" height="15.30" fill="#f26626" rx="0.3"/>
<line x1="276.48" y1="151.90" x2="276.48" y2="175.50" stroke="#b54a1a" stroke-width="0.8"/>
<rect x="274.28" y="162.80" width="4.40" height="6.20" fill="#f26626" rx="0.3"/>
<line x1="283.45" y1="158.50" x2="283.45" y2="186.90" stroke="#b54a1a" stroke-width="0.8"/>
<rect x="281.25" y="169.00" width="4.40" height="14.60" fill="#f26626" rx="0.3"/>
<line x1="290.42" y1="179.30" x2="290.42" y2="225.20" stroke="#b54a1a" stroke-width="0.8"/>
<rect x="288.22" y="183.20" width="4.40" height="8.10" fill="#f26626" rx="0.3"/>
<line x1="297.40" y1="182.60" x2="297.40" y2="204.40" stroke="#b54a1a" stroke-width="0.8"/>
<rect x="295.20" y="190.20" width="4.40" height="11.60" fill="#f26626" rx="0.3"/>
<line x1="304.38" y1="174.90" x2="304.38" y2="212.10" stroke="#0e7a3c" stroke-width="0.8"/>
<rect x="302.18" y="188.00" width="4.40" height="15.80" fill="#12a652" rx="0.3"/>
<line x1="311.35" y1="183.20" x2="311.35" y2="226.50" stroke="#b54a1a" stroke-width="0.8"/>
<rect x="309.15" y="189.10" width="4.40" height="29.10" fill="#f26626" rx="0.3"/>
<line x1="318.32" y1="214.20" x2="318.32" y2="236.80" stroke="#b54a1a" stroke-width="0.8"/>
<rect x="316.12" y="218.60" width="4.40" height="15.30" fill="#f26626" rx="0.3"/>
<line x1="325.30" y1="224.10" x2="325.30" y2="240.90" stroke="#0e7a3c" stroke-width="0.8"/>
<rect x="323.10" y="230.70" width="4.40" height="3.20" fill="#12a652" rx="0.3"/>
<line x1="332.27" y1="213.80" x2="332.27" y2="236.10" stroke="#0e7a3c" stroke-width="0.8"/>
<rect x="330.07" y="228.50" width="4.40" height="1.30" fill="#12a652" rx="0.3"/>
<line x1="339.25" y1="223.00" x2="339.25" y2="276.20" stroke="#b54a1a" stroke-width="0.8"/>
<rect x="337.05" y="228.50" width="4.40" height="37.60" fill="#f26626" rx="0.3"/>
<line x1="346.22" y1="247.10" x2="346.22" y2="271.50" stroke="#b54a1a" stroke-width="0.8"/>
<rect x="344.02" y="265.00" width="4.40" height="6.20" fill="#f26626" rx="0.3"/>
<line x1="353.20" y1="258.70" x2="353.20" y2="296.30" stroke="#b54a1a" stroke-width="0.8"/>
<rect x="351.00" y="270.10" width="4.40" height="8.70" fill="#f26626" rx="0.3"/>
<line x1="360.17" y1="244.90" x2="360.17" y2="286.90" stroke="#0e7a3c" stroke-width="0.8"/>
<rect x="357.97" y="253.60" width="4.40" height="29.60" fill="#12a652" rx="0.3"/>
<line x1="367.15" y1="174.30" x2="367.15" y2="255.20" stroke="#0e7a3c" stroke-width="0.8"/>
<rect x="364.95" y="178.00" width="4.40" height="75.60" fill="#12a652" rx="0.3"/>
<line x1="374.12" y1="171.40" x2="374.12" y2="215.00" stroke="#b54a1a" stroke-width="0.8"/>
<rect x="371.93" y="178.00" width="4.40" height="34.90" fill="#f26626" rx="0.3"/>
<line x1="381.10" y1="197.20" x2="381.10" y2="215.60" stroke="#0e7a3c" stroke-width="0.8"/>
<rect x="378.90" y="206.90" width="4.40" height="5.90" fill="#12a652" rx="0.3"/>
<line x1="388.07" y1="203.80" x2="388.07" y2="215.60" stroke="#b54a1a" stroke-width="0.8"/>
<rect x="385.88" y="206.90" width="4.40" height="5.10" fill="#f26626" rx="0.3"/>
<line x1="395.05" y1="197.20" x2="395.05" y2="214.40" stroke="#0e7a3c" stroke-width="0.8"/>
<rect x="392.85" y="199.30" width="4.40" height="12.70" fill="#12a652" rx="0.3"/>
<line x1="402.02" y1="179.30" x2="402.02" y2="201.00" stroke="#0e7a3c" stroke-width="0.8"/>
<rect x="399.82" y="184.00" width="4.40" height="15.80" fill="#12a652" rx="0.3"/>
<line x1="409.00" y1="149.10" x2="409.00" y2="189.80" stroke="#0e7a3c" stroke-width="0.8"/>
<rect x="406.80" y="159.90" width="4.40" height="25.40" fill="#12a652" rx="0.3"/>
<line x1="415.97" y1="159.00" x2="415.97" y2="192.40" stroke="#b54a1a" stroke-width="0.8"/>
<rect x="413.77" y="159.10" width="4.40" height="31.00" fill="#f26626" rx="0.3"/>
<line x1="422.95" y1="154.40" x2="422.95" y2="190.50" stroke="#0e7a3c" stroke-width="0.8"/>
<rect x="420.75" y="159.10" width="4.40" height="31.00" fill="#12a652" rx="0.3"/>
<line x1="429.92" y1="103.10" x2="429.92" y2="161.70" stroke="#0e7a3c" stroke-width="0.8"/>
<rect x="427.72" y="112.70" width="4.40" height="46.90" fill="#12a652" rx="0.3"/>
<line x1="436.90" y1="101.20" x2="436.90" y2="160.90" stroke="#b54a1a" stroke-width="0.8"/>
<rect x="434.70" y="111.40" width="4.40" height="47.70" fill="#f26626" rx="0.3"/>
<line x1="19.10" y1="156.50" x2="467.40" y2="156.50" stroke="#0f8c46" stroke-width="0.75"/>
<line x1="19.10" y1="158.40" x2="467.40" y2="158.40" stroke="#d9561f" stroke-width="0.75"/>
<rect x="44.10" y="156.10" width="4.40" height="0.90" fill="#19b85e"/>
</g>
<text transform="translate(469.40 106.00) scale(0.9259 1)" font-size="4.212" fill="#dedede"  stroke="#dedede" stroke-width="0.06">0.93200</text>
<text transform="translate(469.40 122.00) scale(0.9259 1)" font-size="4.212" fill="#dedede"  stroke="#dedede" stroke-width="0.06">0.93150</text>
<text transform="translate(469.40 138.00) scale(0.9259 1)" font-size="4.212" fill="#dedede"  stroke="#dedede" stroke-width="0.06">0.93100</text>
<text transform="translate(469.40 171.00) scale(0.9259 1)" font-size="4.212" fill="#dedede"  stroke="#dedede" stroke-width="0.06">0.93000</text>
<text transform="translate(469.40 187.00) scale(0.9259 1)" font-size="4.212" fill="#dedede"  stroke="#dedede" stroke-width="0.06">0.92950</text>
<text transform="translate(469.40 204.00) scale(0.9259 1)" font-size="4.212" fill="#dedede"  stroke="#dedede" stroke-width="0.06">0.92900</text>
<text transform="translate(469.40 220.00) scale(0.9259 1)" font-size="4.212" fill="#dedede"  stroke="#dedede" stroke-width="0.06">0.92850</text>
<text transform="translate(469.40 236.00) scale(0.9259 1)" font-size="4.212" fill="#dedede"  stroke="#dedede" stroke-width="0.06">0.92800</text>
<text transform="translate(469.40 253.00) scale(0.9259 1)" font-size="4.212" fill="#dedede"  stroke="#dedede" stroke-width="0.06">0.92750</text>
<text transform="translate(469.40 269.00) scale(0.9259 1)" font-size="4.212" fill="#dedede"  stroke="#dedede" stroke-width="0.06">0.92700</text>
<text transform="translate(469.40 285.00) scale(0.9259 1)" font-size="4.212" fill="#dedede"  stroke="#dedede" stroke-width="0.06">0.92650</text>
<text transform="translate(469.40 302.00) scale(0.9259 1)" font-size="4.212" fill="#dedede"  stroke="#dedede" stroke-width="0.06">0.92600</text>
<path d="M461.6,83.3 H463.2 V116 H461.6" fill="none" stroke="#c9c9c9" stroke-width="0.6"/>
<text transform="translate(462.0,99.5) rotate(-90)" font-size="3.5" fill="#f0f0f0" text-anchor="middle">30 Cycles</text>
<path d="M465.3,156.6 L468.7,152.65 H486.0 Q487.0,152.65 487.0,153.65 V159.54999999999998 Q487.0,160.54999999999998 486.0,160.54999999999998 H468.7 Z" fill="#12a652" stroke="none" stroke-width="1"/>
<text transform="translate(469.20 158.29) scale(0.9259 1)" font-size="4.428" fill="#fff">0.93040</text>
<path d="M465.3,158.5 L468.7,154.55 H486.0 Q487.0,154.55 487.0,155.55 V161.45 Q487.0,162.45 486.0,162.45 H468.7 Z" fill="#f26626" stroke="none" stroke-width="1"/>
<text transform="translate(469.20 160.19) scale(0.9259 1)" font-size="4.428" fill="#fff">0.93035</text>
<rect x="225.20" y="81.60" width="26.70" height="7.60" fill="#0c8f42" rx="1" stroke="#27b765" stroke-width="0.4"/>
<rect x="254.20" y="81.60" width="26.70" height="7.60" fill="#0c8f42" rx="1" stroke="#27b765" stroke-width="0.4"/>
<text transform="translate(226.60 87.05) scale(0.9259 1)" font-size="4.32" fill="#fff" font-weight="bold">0.93035</text>
<text transform="translate(279.60 87.05) scale(0.9259 1)" font-size="4.32" fill="#fff" text-anchor="end" font-weight="bold">0.93040</text>
<path d="M247.2,86.6 l2.2,-2.2 M247.9,84.3 h1.6 v1.6" fill="none" stroke="#fff" stroke-width="0.6"/>
<path d="M256.4,86.6 l2.2,-2.2 M257.1,84.3 h1.6 v1.6" fill="none" stroke="#fff" stroke-width="0.6"/>
<rect x="225.20" y="91.70" width="11.50" height="1.70" fill="#f26626" rx="0.8"/>
<rect x="239.00" y="91.70" width="41.90" height="1.70" fill="#12a652" rx="0.8"/>
<text transform="translate(20.80 325.71) scale(0.9259 1)" font-size="4.212" fill="#f0f0f0"  stroke="#f0f0f0" stroke-width="0.1">30 Jul 2025, UTC+0</text>
<text transform="translate(95.12 325.71) scale(0.9259 1)" font-size="4.212" fill="#f0f0f0" text-anchor="middle"  stroke="#f0f0f0" stroke-width="0.1">16:00</text>
<text transform="translate(123.02 325.71) scale(0.9259 1)" font-size="4.212" fill="#f0f0f0" text-anchor="middle"  stroke="#f0f0f0" stroke-width="0.1">20:00</text>
<text transform="translate(150.93 325.71) scale(0.9259 1)" font-size="4.212" fill="#f0f0f0" text-anchor="middle"  stroke="#f0f0f0" stroke-width="0.1">31 Jul</text>
<text transform="translate(178.82 325.71) scale(0.9259 1)" font-size="4.212" fill="#f0f0f0" text-anchor="middle"  stroke="#f0f0f0" stroke-width="0.1">04:00</text>
<text transform="translate(206.72 325.71) scale(0.9259 1)" font-size="4.212" fill="#f0f0f0" text-anchor="middle"  stroke="#f0f0f0" stroke-width="0.1">08:00</text>
<text transform="translate(234.62 325.71) scale(0.9259 1)" font-size="4.212" fill="#f0f0f0" text-anchor="middle"  stroke="#f0f0f0" stroke-width="0.1">12:00</text>
<text transform="translate(262.52 325.71) scale(0.9259 1)" font-size="4.212" fill="#f0f0f0" text-anchor="middle"  stroke="#f0f0f0" stroke-width="0.1">16:00</text>
<text transform="translate(290.42 325.71) scale(0.9259 1)" font-size="4.212" fill="#f0f0f0" text-anchor="middle"  stroke="#f0f0f0" stroke-width="0.1">20:00</text>
<text transform="translate(318.32 325.71) scale(0.9259 1)" font-size="4.212" fill="#f0f0f0" text-anchor="middle"  stroke="#f0f0f0" stroke-width="0.1">01 Aug</text>
<text transform="translate(346.22 325.71) scale(0.9259 1)" font-size="4.212" fill="#f0f0f0" text-anchor="middle"  stroke="#f0f0f0" stroke-width="0.1">04:00</text>
<text transform="translate(374.12 325.71) scale(0.9259 1)" font-size="4.212" fill="#f0f0f0" text-anchor="middle"  stroke="#f0f0f0" stroke-width="0.1">08:00</text>
<text transform="translate(402.02 325.71) scale(0.9259 1)" font-size="4.212" fill="#f0f0f0" text-anchor="middle"  stroke="#f0f0f0" stroke-width="0.1">12:00</text>
<text transform="translate(429.92 325.71) scale(0.9259 1)" font-size="4.212" fill="#f0f0f0" text-anchor="middle"  stroke="#f0f0f0" stroke-width="0.1">16:00</text>
<text transform="translate(457.82 325.71) scale(0.9259 1)" font-size="4.212" fill="#f0f0f0" text-anchor="middle"  stroke="#f0f0f0" stroke-width="0.1">20:00</text>
<rect x="358.90" y="316.30" width="18.00" height="7.30" fill="#0a0a0a" rx="1.0" stroke="#9a9a9a" stroke-width="0.55"/>
<rect x="360.90" y="317.90" width="0.50" height="3.80" fill="#bdbdbd"/>
<rect x="361.90" y="317.90" width="0.50" height="3.80" fill="#bdbdbd"/>
<text transform="translate(375.00 321.45) scale(0.9259 1)" font-size="4.32" fill="#f4f4f4" text-anchor="end"  stroke="#f4f4f4" stroke-width="0.1">03:49</text>
<text transform="translate(22.60 336.01) scale(0.9259 1)" font-size="4.212" fill="#f2f2f2"  stroke="#f2f2f2" stroke-width="0.1">MACD Crossover 1 (Close, 26,...</text>
<text transform="translate(469.40 347.11) scale(0.9259 1)" font-size="4.212" fill="#dedede"  stroke="#dedede" stroke-width="0.06">0.00020</text>
<text transform="translate(469.40 366.01) scale(0.9259 1)" font-size="4.212" fill="#dedede"  stroke="#dedede" stroke-width="0.06">0.00000</text>
<text transform="translate(469.40 383.81) scale(0.9259 1)" font-size="4.212" fill="#dedede"  stroke="#dedede" stroke-width="0.06">-0.00020</text>
<text transform="translate(469.40 402.11) scale(0.9259 1)" font-size="4.212" fill="#dedede"  stroke="#dedede" stroke-width="0.06">-0.00040</text>
<text transform="translate(469.40 420.81) scale(0.9259 1)" font-size="4.212" fill="#dedede"  stroke="#dedede" stroke-width="0.06">-0.00060</text>
<g clip-path="url(#mclip)">
<rect x="25.00" y="359.00" width="1.00" height="5.50" fill="#1a74c6"/>
<rect x="32.00" y="357.70" width="1.00" height="6.80" fill="#1a74c6"/>
<rect x="39.00" y="357.70" width="1.00" height="6.80" fill="#1a74c6"/>
<rect x="46.00" y="357.00" width="1.00" height="7.50" fill="#1a74c6"/>
<rect x="53.00" y="357.70" width="1.00" height="6.80" fill="#1a74c6"/>
<rect x="60.00" y="356.50" width="1.00" height="8.00" fill="#1a74c6"/>
<rect x="67.00" y="356.00" width="1.00" height="8.50" fill="#1a74c6"/>
<rect x="74.00" y="356.00" width="1.00" height="8.50" fill="#1a74c6"/>
<rect x="81.00" y="357.00" width="1.00" height="7.50" fill="#1a74c6"/>
<rect x="88.00" y="359.70" width="1.00" height="4.80" fill="#1a74c6"/>
<rect x="95.00" y="362.70" width="1.00" height="1.80" fill="#1a74c6"/>
<rect x="102.00" y="363.00" width="1.00" height="1.50" fill="#1a74c6"/>
<rect x="109.00" y="362.20" width="1.00" height="2.30" fill="#1a74c6"/>
<rect x="116.00" y="362.20" width="1.00" height="2.30" fill="#1a74c6"/>
<rect x="123.00" y="363.20" width="1.00" height="1.30" fill="#1a74c6"/>
<rect x="130.00" y="356.50" width="1.00" height="8.00" fill="#1a74c6"/>
<rect x="136.00" y="353.90" width="1.00" height="10.60" fill="#1a74c6"/>
<rect x="143.00" y="355.20" width="1.00" height="9.30" fill="#1a74c6"/>
<rect x="150.00" y="357.70" width="1.00" height="6.80" fill="#1a74c6"/>
<rect x="157.00" y="364.50" width="1.00" height="2.00" fill="#1a74c6"/>
<rect x="164.00" y="364.50" width="1.00" height="3.80" fill="#1a74c6"/>
<rect x="171.00" y="364.50" width="1.00" height="3.30" fill="#1a74c6"/>
<rect x="178.00" y="364.50" width="1.00" height="6.30" fill="#1a74c6"/>
<rect x="185.00" y="364.50" width="1.00" height="8.30" fill="#1a74c6"/>
<rect x="192.00" y="364.50" width="1.00" height="5.00" fill="#1a74c6"/>
<rect x="199.00" y="364.50" width="1.00" height="3.30" fill="#1a74c6"/>
<rect x="206.00" y="364.50" width="1.00" height="0.50" fill="#1a74c6"/>
<rect x="213.00" y="364.00" width="1.00" height="0.60" fill="#1a74c6"/>
<rect x="220.00" y="364.50" width="1.00" height="1.30" fill="#1a74c6"/>
<rect x="227.00" y="364.50" width="1.00" height="1.30" fill="#1a74c6"/>
<rect x="234.00" y="364.10" width="1.00" height="0.60" fill="#1a74c6"/>
<rect x="241.00" y="363.50" width="1.00" height="1.00" fill="#1a74c6"/>
<rect x="248.00" y="360.20" width="1.00" height="4.30" fill="#1a74c6"/>
<rect x="255.00" y="357.00" width="1.00" height="7.50" fill="#1a74c6"/>
<rect x="262.00" y="351.90" width="1.00" height="12.60" fill="#1a74c6"/>
<rect x="269.00" y="351.90" width="1.00" height="12.60" fill="#1a74c6"/>
<rect x="276.00" y="352.70" width="1.00" height="11.80" fill="#1a74c6"/>
<rect x="283.00" y="356.00" width="1.00" height="8.50" fill="#1a74c6"/>
<rect x="290.00" y="360.20" width="1.00" height="4.30" fill="#1a74c6"/>
<rect x="297.00" y="364.00" width="1.00" height="0.60" fill="#1a74c6"/>
<rect x="304.00" y="364.50" width="1.00" height="0.50" fill="#1a74c6"/>
<rect x="311.00" y="364.50" width="1.00" height="5.30" fill="#1a74c6"/>
<rect x="318.00" y="364.50" width="1.00" height="10.30" fill="#1a74c6"/>
<rect x="325.00" y="364.50" width="1.00" height="12.00" fill="#1a74c6"/>
<rect x="332.00" y="364.50" width="1.00" height="12.70" fill="#1a74c6"/>
<rect x="339.00" y="364.50" width="1.00" height="17.60" fill="#1a74c6"/>
<rect x="346.00" y="364.50" width="1.00" height="20.40" fill="#1a74c6"/>
<rect x="353.00" y="364.50" width="1.00" height="22.60" fill="#1a74c6"/>
<rect x="360.00" y="364.50" width="1.00" height="17.90" fill="#1a74c6"/>
<rect x="367.00" y="364.50" width="1.00" height="2.50" fill="#1a74c6"/>
<rect x="374.00" y="361.50" width="1.00" height="3.00" fill="#1a74c6"/>
<rect x="381.00" y="357.00" width="1.00" height="7.50" fill="#1a74c6"/>
<rect x="388.00" y="354.70" width="1.00" height="9.80" fill="#1a74c6"/>
<rect x="395.00" y="351.90" width="1.00" height="12.60" fill="#1a74c6"/>
<rect x="402.00" y="348.20" width="1.00" height="16.30" fill="#1a74c6"/>
<rect x="408.00" y="341.90" width="1.00" height="22.60" fill="#1a74c6"/>
<rect x="415.00" y="343.90" width="1.00" height="20.60" fill="#1a74c6"/>
<rect x="422.00" y="340.90" width="1.00" height="23.60" fill="#1a74c6"/>
<rect x="429.00" y="333.10" width="1.00" height="31.40" fill="#1a74c6"/>
<rect x="436.00" y="336.30" width="1.00" height="28.20" fill="#1a74c6"/>
<polyline points="18.77,404.98 25.31,402.97 32.35,401.71 39.14,399.95 46.19,398.44 53.23,397.18 60.27,395.42 67.06,393.66 74.10,391.65 81.15,390.39 87.94,389.13 94.98,388.63 101.77,388.38 108.81,387.88 115.60,387.37 122.65,387.12 129.69,385.36 136.48,383.35 143.52,380.84 150.56,379.58 157.35,380.33 164.40,381.59 171.44,382.85 171.76,383.10 178.80,384.61 185.59,386.62 192.64,387.88 199.68,388.63 206.47,388.88 213.51,388.88 220.30,389.39 227.34,389.64 234.39,389.64 241.43,389.39 248.47,388.38 255.26,386.62 262.30,383.85 269.35,380.84 276.14,378.57 283.18,377.06 290.22,376.06 297.26,376.31 304.05,376.31 311.10,377.82 318.14,380.33 325.18,383.60 332.29,386.62 339.08,390.90 346.12,396.18 352.91,401.71 359.95,405.99 367.00,406.74 373.79,405.99 380.83,403.72 387.87,401.21 394.66,398.44 401.70,394.16 408.75,389.13 415.54,384.10 422.58,378.57 429.37,371.53 436.66,364.49" fill="none" stroke="#80e28c" stroke-width="1.15" stroke-linejoin="round" stroke-linecap="round"/>
<polyline points="18.77,402.46 25.31,399.20 32.35,396.18 39.14,394.16 46.19,392.40 53.23,391.15 60.27,388.38 67.06,385.87 74.10,384.10 81.15,383.35 87.94,384.86 94.98,387.12 101.77,387.63 108.81,386.12 115.60,386.37 122.65,386.87 129.69,378.32 136.48,373.54 143.52,372.79 150.56,374.04 157.35,382.34 164.40,385.87 171.44,386.62 171.76,386.62 178.80,390.90 185.59,394.92 192.64,392.40 199.68,392.15 206.47,389.64 213.51,389.13 220.30,390.90 227.34,391.40 234.39,389.89 241.43,389.13 248.47,384.86 255.26,379.83 262.30,372.79 269.35,369.52 276.14,368.26 283.18,369.52 290.22,372.28 297.26,376.06 304.05,376.56 311.10,384.10 318.14,391.65 325.18,396.18 332.29,399.20 339.08,408.00 346.12,416.30 352.91,423.84 359.95,424.85 367.00,409.26 373.79,402.46 380.83,397.43 387.87,393.41 394.66,387.37 401.70,379.07 408.75,368.26 415.54,365.24 422.58,357.19 429.37,340.85 436.66,337.07" fill="none" stroke="#ffd60a" stroke-width="1.1" stroke-linejoin="round" stroke-linecap="round"/>
</g>
<rect x="489.60" y="68.00" width="14.60" height="378.00" fill="#2a2a2a"/>
<rect x="491.00" y="69.80" width="10.30" height="171.80" fill="#454545" rx="1"/>
<rect x="492.40" y="71.40" width="7.60" height="1.20" fill="#5a5a5a" rx="0.4"/>
<rect x="492.40" y="76.20" width="7.70" height="7.50" fill="#262626" rx="0.8"/>
<path d="M494.9,77.4 l3.3,3.0 l-1.5,0.1 l0.8,1.7 l-0.7,0.4 l-0.8,-1.7 l-1.1,1.0 z" fill="#f4f4f4" stroke="none" stroke-width="1"/>
<path d="M496.2,87.3 v5 M493.7,89.8 h5" fill="none" stroke="#adadad" stroke-width="0.55"/>
<circle cx="496.20" cy="89.80" r="0.90" fill="none" stroke="#adadad" stroke-width="0.4"/>
<path d="M494,101.0 l4,-4 M495.2,102.4 l3.6,-3.6" fill="none" stroke="#d4d4d4" stroke-width="0.7"/>
<path d="M496.2,106.6 v5.4 M494,109.2 h4.6" fill="none" stroke="#adadad" stroke-width="0.55"/>
<circle cx="497.20" cy="110.20" r="1.20" fill="none" stroke="#adadad" stroke-width="0.45"/>
<rect x="492.40" y="114.50" width="7.60" height="0.50" fill="#5e5e5e"/>
<path d="M493.4,123 l5.8,-5.8" fill="none" stroke="#d0d0d0" stroke-width="0.7"/>
<path d="M493.6,131.2 l5,-5 M494.4,128 l2.8,2.8 M495.8,126.6 l2.8,2.8" fill="none" stroke="#adadad" stroke-width="0.5"/>
<path d="M496.3,135.8 l2.5,2.2 l-1.0,2.9 h-3.0 l-1.0,-2.9 z" fill="none" stroke="#adadad" stroke-width="0.55"/>
<path d="M495.0,138.4 h2.6 v1.6 h-2.6 z" fill="#7a7a7a" stroke="#adadad" stroke-width="0.4"/>
<path d="M493.8,151 l2.4,-2.4 M495.4,146.4 l3,3 M496.2,147.2 l1.6,-1.8 l1.2,1.2 l-1.8,1.6" fill="none" stroke="#adadad" stroke-width="0.55"/>
<path d="M493,155.6 h6.6" fill="none" stroke="#8a8a8a" stroke-width="0.5"/>
<path d="M493,158.8 h6.6 M499.3,158.8 v1.8 M493,160.9 h2.4" fill="none" stroke="#cfcfcf" stroke-width="0.55"/>
<path d="M493.4,166.2 h5.8 v3.4 h-3.4 l-1.3,1.3 v-1.3 h-1.1 z" fill="none" stroke="#adadad" stroke-width="0.55"/>
<path d="M494,179.6 l1.2,-3.6 l2.4,-1.4 l1.6,1.8 l-2,2.4 z M495.2,176 l2.2,2.4" fill="none" stroke="#adadad" stroke-width="0.5"/>
<path d="M494.2,185.2 h4.2 M496.3,185.2 v4.2" fill="none" stroke="#d0d0d0" stroke-width="0.65"/>
<rect x="492.50" y="193.10" width="7.50" height="7.80" fill="#c9b3e6" rx="0.8"/>
<circle cx="496.20" cy="207.30" r="2.30" fill="none" stroke="#8f8f8f" stroke-width="0.6"/>
<circle cx="496.20" cy="207.30" r="1.00" fill="#8f8f8f" stroke="none" stroke-width="1"/>
<path d="M493.2,216.8 q3,-3.2 6,0 q-3,3.2 -6,0 z" fill="none" stroke="#adadad" stroke-width="0.6"/>
<circle cx="496.20" cy="216.80" r="0.90" fill="#adadad" stroke="none" stroke-width="1"/>
<path d="M494,228.6 q0.2,-3.8 2.2,-4 q2,0.2 2.2,4 z M495.6,229.5 h1.2" fill="none" stroke="#adadad" stroke-width="0.55"/>
<path d="M493.6,234.4 h5 v3.8 h-5 M493.6,236.3 h3.6" fill="none" stroke="#dcdcdc" stroke-width="0.6"/>
<circle cx="502.80" cy="247.50" r="0.60" fill="#a8a8a8" stroke="none" stroke-width="1"/>
<circle cx="502.80" cy="251.90" r="0.60" fill="#a8a8a8" stroke="none" stroke-width="1"/>
<circle cx="502.80" cy="256.30" r="0.60" fill="#a8a8a8" stroke="none" stroke-width="1"/>
<rect x="504.40" y="69.30" width="17.60" height="10.00" fill="#373737" rx="1"/>
<text transform="translate(513.20 75.16) scale(0.9259 1)" font-size="4.644" fill="#e4e4e4" text-anchor="middle"  stroke="#e4e4e4" stroke-width="0.08">Symbol</text>
<rect x="524.30" y="69.30" width="12.30" height="10.00" fill="#4f4f4f" rx="1"/>
<text transform="translate(530.45 75.16) scale(0.9259 1)" font-size="4.644" fill="#ffffff" text-anchor="middle"  stroke="#ffffff" stroke-width="0.2">DoM</text>
<rect x="538.80" y="69.30" width="21.20" height="10.00" fill="#373737" rx="1"/>
<text transform="translate(549.40 75.16) scale(0.9259 1)" font-size="4.644" fill="#e4e4e4" text-anchor="middle"  stroke="#e4e4e4" stroke-width="0.08">Calendar</text>
<rect x="562.00" y="69.30" width="13.60" height="10.00" fill="#373737" rx="1"/>
<text transform="translate(568.80 75.16) scale(0.9259 1)" font-size="4.644" fill="#e4e4e4" text-anchor="middle"  stroke="#e4e4e4" stroke-width="0.08">News</text>
<rect x="578.30" y="69.30" width="26.70" height="10.00" fill="#373737" rx="1"/>
<text transform="translate(591.65 75.16) scale(0.9259 1)" font-size="4.644" fill="#e4e4e4" text-anchor="middle"  stroke="#e4e4e4" stroke-width="0.08">Notifications</text>
<rect x="503.70" y="78.40" width="150.30" height="356.80" fill="#4a4a4a"/>
<rect x="524.30" y="77.50" width="12.30" height="1.60" fill="#4f4f4f"/>
<rect x="506.00" y="81.00" width="70.60" height="6.60" fill="#262626" rx="0.8"/>
<text transform="translate(507.60 86.06) scale(0.9259 1)" font-size="4.644" fill="#fff" stroke="#fff" stroke-width="0.12">EURCHF</text>
<polygon points="572.50,83.35 575.50,83.35 574.00,85.60" fill="#c4c4c4"/>
<rect x="617.00" y="80.80" width="6.80" height="6.80" fill="#5b5b5b" rx="0.6"/>
<rect x="626.40" y="80.80" width="6.80" height="6.80" fill="#5b5b5b" rx="0.6"/>
<rect x="635.70" y="80.80" width="6.80" height="6.80" fill="#5b5b5b" rx="0.6"/>
<rect x="645.00" y="80.80" width="6.80" height="6.80" fill="#5b5b5b" rx="0.6"/>
<circle cx="618.90" cy="84.20" r="0.70" fill="#d8d8d8" stroke="none" stroke-width="1"/>
<circle cx="621.80" cy="82.60" r="0.70" fill="#d8d8d8" stroke="none" stroke-width="1"/>
<circle cx="621.80" cy="85.80" r="0.70" fill="#d8d8d8" stroke="none" stroke-width="1"/>
<path d="M618.9,84.2 L621.8,82.6 M618.9,84.2 L621.8,85.8" fill="none" stroke="#d8d8d8" stroke-width="0.4"/>
<polygon points="629.80,82.10 630.39,83.59 631.99,83.69 630.75,84.71 631.15,86.26 629.80,85.40 628.45,86.26 628.85,84.71 627.61,83.69 629.21,83.59" fill="none" stroke="#d8d8d8" stroke-width="0.45"/>
<path d="M637.2,82.6 h3.8 v3.2 h-3.8 z M637.2,83.6 l1.9,1.4 l1.9,-1.4" fill="none" stroke="#d8d8d8" stroke-width="0.45"/>
<path d="M646.6,86 q0.2,-3.4 1.8,-3.6 q1.6,0.2 1.8,3.6 z M648,86.8 h0.9" fill="none" stroke="#d8d8d8" stroke-width="0.45"/>
<rect x="506.00" y="90.20" width="51.80" height="7.50" fill="#393939" rx="0.8"/>
<rect x="558.60" y="90.20" width="45.00" height="7.50" fill="#5e5e5e" rx="0.8"/>
<rect x="604.60" y="90.20" width="47.60" height="7.50" fill="#5e5e5e" rx="0.8"/>
<text transform="translate(531.90 95.06) scale(0.9259 1)" font-size="4.644" fill="#fff" text-anchor="middle"  stroke="#fff" stroke-width="0.2">Standard DoM</text>
<text transform="translate(581.10 95.02) scale(0.9259 1)" font-size="4.536" fill="#e2e2e2" text-anchor="middle">Price DoM</text>
<text transform="translate(628.40 95.02) scale(0.9259 1)" font-size="4.536" fill="#e2e2e2" text-anchor="middle">VWAP DoM</text>
<rect x="506.00" y="99.70" width="72.30" height="315.00" fill="#262626"/>
<rect x="580.40" y="99.70" width="71.60" height="315.00" fill="#262626"/>
<rect x="577.00" y="99.70" width="1.30" height="7.20" fill="#f26626" rx="0.9"/>
<rect x="580.40" y="99.70" width="0.80" height="7.20" fill="#0f9d4a" rx="0.9"/>
<text transform="translate(508.20 105.00) scale(0.9259 1)" font-size="4.644" fill="#fff"  stroke="#fff" stroke-width="0.12">1.00</text>
<text transform="translate(576.20 105.00) scale(0.9259 1)" font-size="4.644" fill="#fff" text-anchor="end"  stroke="#fff" stroke-width="0.12">0.93035</text>
<text transform="translate(582.00 105.00) scale(0.9259 1)" font-size="4.644" fill="#fff"  stroke="#fff" stroke-width="0.12">0.93040</text>
<text transform="translate(650.60 105.00) scale(0.9259 1)" font-size="4.644" fill="#fff" text-anchor="end"  stroke="#fff" stroke-width="0.12">1.00</text>
<rect x="574.20" y="108.94" width="4.10" height="7.20" fill="#f26626" rx="0.9"/>
<rect x="580.40" y="108.94" width="3.60" height="7.20" fill="#0f9d4a" rx="0.9"/>
<text transform="translate(508.20 114.00) scale(0.9259 1)" font-size="4.644" fill="#fff"  stroke="#fff" stroke-width="0.12">5.00</text>
<text transform="translate(576.20 114.00) scale(0.9259 1)" font-size="4.644" fill="#fff" text-anchor="end"  stroke="#fff" stroke-width="0.12">0.93033</text>
<text transform="translate(582.00 114.00) scale(0.9259 1)" font-size="4.644" fill="#fff"  stroke="#fff" stroke-width="0.12">0.93042</text>
<text transform="translate(650.60 114.00) scale(0.9259 1)" font-size="4.644" fill="#fff" text-anchor="end"  stroke="#fff" stroke-width="0.12">5.00</text>
<rect x="570.80" y="118.18" width="7.50" height="7.20" fill="#f26626" rx="0.9"/>
<rect x="580.40" y="118.18" width="6.70" height="7.20" fill="#0f9d4a" rx="0.9"/>
<text transform="translate(508.20 123.00) scale(0.9259 1)" font-size="4.644" fill="#fff"  stroke="#fff" stroke-width="0.12">10.00</text>
<text transform="translate(576.20 123.00) scale(0.9259 1)" font-size="4.644" fill="#fff" text-anchor="end"  stroke="#fff" stroke-width="0.12">0.93031</text>
<text transform="translate(582.00 123.00) scale(0.9259 1)" font-size="4.644" fill="#fff"  stroke="#fff" stroke-width="0.12">0.93044</text>
<text transform="translate(650.60 123.00) scale(0.9259 1)" font-size="4.644" fill="#fff" text-anchor="end"  stroke="#fff" stroke-width="0.12">10.00</text>
<rect x="556.40" y="127.42" width="21.90" height="7.20" fill="#f26626" rx="0.9"/>
<rect x="580.40" y="127.42" width="21.30" height="7.20" fill="#0f9d4a" rx="0.9"/>
<text transform="translate(508.20 133.00) scale(0.9259 1)" font-size="4.644" fill="#fff"  stroke="#fff" stroke-width="0.12">30.00</text>
<text transform="translate(576.20 133.00) scale(0.9259 1)" font-size="4.644" fill="#fff" text-anchor="end"  stroke="#fff" stroke-width="0.12">0.93029</text>
<text transform="translate(582.00 133.00) scale(0.9259 1)" font-size="4.644" fill="#fff"  stroke="#fff" stroke-width="0.12">0.93047</text>
<text transform="translate(650.60 133.00) scale(0.9259 1)" font-size="4.644" fill="#fff" text-anchor="end"  stroke="#fff" stroke-width="0.12">30.00</text>
<rect x="541.90" y="136.66" width="36.40" height="7.20" fill="#f26626" rx="0.9"/>
<rect x="580.40" y="136.66" width="35.50" height="7.20" fill="#0f9d4a" rx="0.9"/>
<text transform="translate(508.20 142.00) scale(0.9259 1)" font-size="4.644" fill="#fff"  stroke="#fff" stroke-width="0.12">50.00</text>
<text transform="translate(576.20 142.00) scale(0.9259 1)" font-size="4.644" fill="#fff" text-anchor="end"  stroke="#fff" stroke-width="0.12">0.93026</text>
<text transform="translate(582.00 142.00) scale(0.9259 1)" font-size="4.644" fill="#fff"  stroke="#fff" stroke-width="0.12">0.93049</text>
<text transform="translate(650.60 142.00) scale(0.9259 1)" font-size="4.644" fill="#fff" text-anchor="end"  stroke="#fff" stroke-width="0.12">50.00</text>
<rect x="506.00" y="145.90" width="72.30" height="7.20" fill="#f26626" rx="0.9"/>
<rect x="580.40" y="145.90" width="71.60" height="7.20" fill="#0f9d4a" rx="0.9"/>
<text transform="translate(508.20 151.00) scale(0.9259 1)" font-size="4.644" fill="#fff"  stroke="#fff" stroke-width="0.12">100.00</text>
<text transform="translate(576.20 151.00) scale(0.9259 1)" font-size="4.644" fill="#fff" text-anchor="end"  stroke="#fff" stroke-width="0.12">0.93023</text>
<text transform="translate(582.00 151.00) scale(0.9259 1)" font-size="4.644" fill="#fff"  stroke="#fff" stroke-width="0.12">0.93053</text>
<text transform="translate(650.60 151.00) scale(0.9259 1)" font-size="4.644" fill="#fff" text-anchor="end"  stroke="#fff" stroke-width="0.12">100.00</text>
<rect x="506.00" y="417.10" width="64.60" height="7.00" fill="#5f5f5f" rx="1"/>
<rect x="506.00" y="426.60" width="64.60" height="7.20" fill="#5f5f5f" rx="1"/>
<rect x="587.30" y="417.10" width="64.90" height="7.00" fill="#5f5f5f" rx="1"/>
<rect x="587.30" y="426.60" width="64.90" height="7.20" fill="#5f5f5f" rx="1"/>
<text transform="translate(538.30 422.66) scale(0.9259 1)" font-size="4.644" fill="#fff" text-anchor="middle"  stroke="#fff" stroke-width="0.2">Cancel sell orders</text>
<text transform="translate(538.30 431.96) scale(0.9259 1)" font-size="4.644" fill="#fff" text-anchor="middle"  stroke="#fff" stroke-width="0.2">Close sell positions</text>
<text transform="translate(619.70 422.66) scale(0.9259 1)" font-size="4.644" fill="#fff" text-anchor="middle"  stroke="#fff" stroke-width="0.2">Cancel buy orders</text>
<text transform="translate(619.70 431.96) scale(0.9259 1)" font-size="4.644" fill="#fff" text-anchor="middle"  stroke="#fff" stroke-width="0.2">Close buy positions</text>
<text transform="translate(578.80 427.09) scale(0.9259 1)" font-size="4.428" fill="#e4e4e4" text-anchor="middle"  stroke="#e4e4e4" stroke-width="0.06">0.00</text>
<rect x="15.00" y="435.70" width="641.00" height="9.60" fill="#2a2a2a"/>
<circle cx="247.90" cy="436.90" r="0.55" fill="#9a9a9a" stroke="none" stroke-width="1"/>
<circle cx="251.90" cy="436.90" r="0.55" fill="#9a9a9a" stroke="none" stroke-width="1"/>
<circle cx="255.90" cy="436.90" r="0.55" fill="#9a9a9a" stroke="none" stroke-width="1"/>
<rect x="17.40" y="440.30" width="1.60" height="1.60" fill="#12a652"/>
<text transform="translate(21.20 442.66) scale(0.9259 1)" font-size="4.644" fill="#ececec"  stroke="#ececec" stroke-width="0.08">Trading sessions: Frankfurt, London</text>
<text transform="translate(507.20 442.66) scale(0.9259 1)" font-size="4.644" fill="#e2e2e2"  stroke="#e2e2e2" stroke-width="0.08">Current time:</text>
<text transform="translate(535.30 442.66) scale(0.9259 1)" font-size="4.644" fill="#fff"  stroke="#fff" stroke-width="0.18">UTC+0</text>
<polygon points="550.70,440.37 552.50,440.37 551.60,441.72" fill="#a5a5a5"/>
<text transform="translate(556.50 442.66) scale(0.9259 1)" font-size="4.644" fill="#fff"  stroke="#fff" stroke-width="0.18">17:56 01.08.2025</text>
<text transform="translate(596.40 442.39) scale(0.9259 1)" font-size="3.888" fill="#fff" font-weight="bold">ON</text>
<rect x="603.40" y="438.40" width="7.60" height="5.40" fill="#565656" rx="0.8"/>
<rect x="615.70" y="438.20" width="0.50" height="5.60" fill="#4a4a4a"/>
<text transform="translate(651.80 442.66) scale(0.9259 1)" font-size="4.644" fill="#d8d8d8" text-anchor="end"  stroke="#d8d8d8" stroke-width="0.08">146 ms / 146 ms</text>
<rect x="0.00" y="445.10" width="656.00" height="1.40" fill="#0c0c0c"/>
</g>
</svg>
</body></html>
